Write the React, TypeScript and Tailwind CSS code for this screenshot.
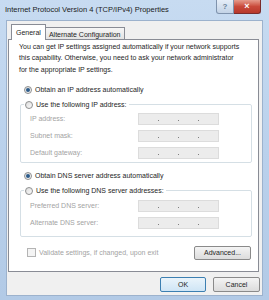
const font = "font-['Liberation_Sans',Arial,sans-serif]";

function Radio({ checked, label }: { checked?: boolean; label: string }) {
    return (
        <div className="flex items-center h-[12px] bg-white pl-[1px] pr-[2px]">
            <span className="w-[8px] h-[8px] rounded-full border border-[#8e8f8f] bg-gradient-to-br from-[#dcdcdc] to-[#fbfbfb] flex items-center justify-center">
                {checked && <span className="w-[4px] h-[4px] rounded-full bg-[#2c5b8a]" />}
            </span>
            <span className="ml-[3px] text-[#1e1e1e]">{label}</span>
        </div>
    );
}

function IpBox() {
    return (
        <div className="w-[81px] h-[12px] bg-[#ececec] border border-[#dcdcdc] flex items-end justify-evenly pb-[3px]">
            <span className="w-[1px] h-[1px] bg-[#808080]" />
            <span className="w-[1px] h-[1px] bg-[#808080]" />
            <span className="w-[1px] h-[1px] bg-[#808080]" />
        </div>
    );
}

function FieldRow({ label }: { label: string }) {
    return (
        <div className="flex items-center h-[12px]">
            <span className="w-[114px] pl-[6px] text-[#a3a3a3]">{label}</span>
            <IpBox />
        </div>
    );
}

export default function App() {
    return (
        <div className={`w-[269px] h-[300px] bg-gradient-to-b from-[#c7dbf1] via-[#bad1ec] to-[#b2cae6] flex flex-col text-[7px] leading-none ${font}`}>
            {/* title bar */}
            <div className="h-[20px] flex items-start shrink-0">
                <span className="pl-[5px] pt-[6px] text-[7.5px] text-[#1b1b1b]">
                    Internet Protocol Version 4 (TCP/IPv4) Properties
                </span>
                <div className="ml-auto mr-[8px] flex">
                    <div className="w-[18px] h-[14px] rounded-bl-[3px] border border-t-0 border-[#7f93ad] bg-gradient-to-b from-[#e6eef8] to-[#c3d3e6] flex items-center justify-center text-[8px] font-bold text-[#6a7f99]">
                        ?
                    </div>
                    <div className="w-[27px] h-[14px] rounded-br-[3px] border border-t-0 border-l-0 border-[#7a2c2c] bg-gradient-to-b from-[#e59a8c] via-[#c9493a] to-[#b7382b] flex items-center justify-center text-[9px] font-bold text-white">
                        ×
                    </div>
                </div>
            </div>

            {/* client area */}
            <div className="mx-[6px] h-[276px] border border-[#9cb2cd] bg-[#f0f0f0] flex flex-col">
                {/* tabs */}
                <div className="flex items-end ml-[4px] mt-[3px] h-[15px]">
                    <div className="h-[16px] px-[4px] pt-[4px] border border-b-0 border-[#898c95] bg-white text-[#1e1e1e] relative z-10 -mb-[1px]">
                        General
                    </div>
                    <div className="h-[12px] px-[3px] pt-[2.5px] border border-l-0 border-b-0 border-[#898c95] bg-gradient-to-b from-[#f6f6f6] to-[#e3e3e3] text-[#1e1e1e]">
                        Alternate Configuration
                    </div>
                </div>

                {/* panel */}
                <div className="ml-[1px] w-[251px] h-[233px] bg-white border border-[#898c95] flex flex-col">
                    <p className="pl-[10px] pr-[15px] pt-[1px] leading-[11.3px] text-[#1e1e1e]">
                        You can get IP settings assigned automatically if your network supports this capability. Otherwise, you need to ask your network administrator for the appropriate IP settings.
                    </p>

                    <div className="ml-[14px] mt-[9px] flex">
                        <Radio checked label="Obtain an IP address automatically" />
                    </div>

                    <fieldset className="ml-[11px] mt-[3px] w-[232px] border border-[#d5dfe5] rounded-[2px] pl-[3px] pb-[3px]">
                        <legend className="px-0">
                            <Radio label="Use the following IP address:" />
                        </legend>
                        <div className="flex flex-col gap-[5px] mt-[2px]">
                            <FieldRow label="IP address:" />
                            <FieldRow label="Subnet mask:" />
                            <FieldRow label="Default gateway:" />
                        </div>
                    </fieldset>

                    <div className="ml-[14px] mt-[7px] flex">
                        <Radio checked label="Obtain DNS server address automatically" />
                    </div>

                    <fieldset className="ml-[11px] mt-[3px] w-[232px] border border-[#d5dfe5] rounded-[2px] pl-[3px] pb-[7px]">
                        <legend className="px-0">
                            <Radio label="Use the following DNS server addresses:" />
                        </legend>
                        <div className="flex flex-col gap-[5px] mt-[3px]">
                            <FieldRow label="Preferred DNS server:" />
                            <FieldRow label="Alternate DNS server:" />
                        </div>
                    </fieldset>

                    <div className="mt-[9px] ml-[18px] mr-[7px] flex items-center h-[14px]">
                        <span className="w-[9px] h-[9px] border border-[#b4b4b4] bg-[#f4f4f4]" />
                        <span className="ml-[3px] text-[#a3a3a3]">Validate settings, if changed, upon exit</span>
                        <button className="ml-auto w-[57px] h-[14px] rounded-[2px] border border-[#8a8a8a] bg-gradient-to-b from-[#f4f4f4] to-[#dcdcdc] text-[#1e1e1e]">
                            Advanced...
                        </button>
                    </div>
                </div>

                {/* dialog buttons */}
                <div className="mt-[5px] flex justify-end gap-[7px] pr-[2px]">
                    <button className="w-[46px] h-[15px] rounded-[2px] border border-[#3c7fb1] bg-gradient-to-b from-[#eaf4fb] to-[#cfe5f5] text-[#1e1e1e]">
                        OK
                    </button>
                    <button className="w-[47px] h-[15px] rounded-[2px] border border-[#8a8a8a] bg-gradient-to-b from-[#f4f4f4] to-[#dcdcdc] text-[#1e1e1e]">
                        Cancel
                    </button>
                </div>
            </div>
        </div>
    );
}
